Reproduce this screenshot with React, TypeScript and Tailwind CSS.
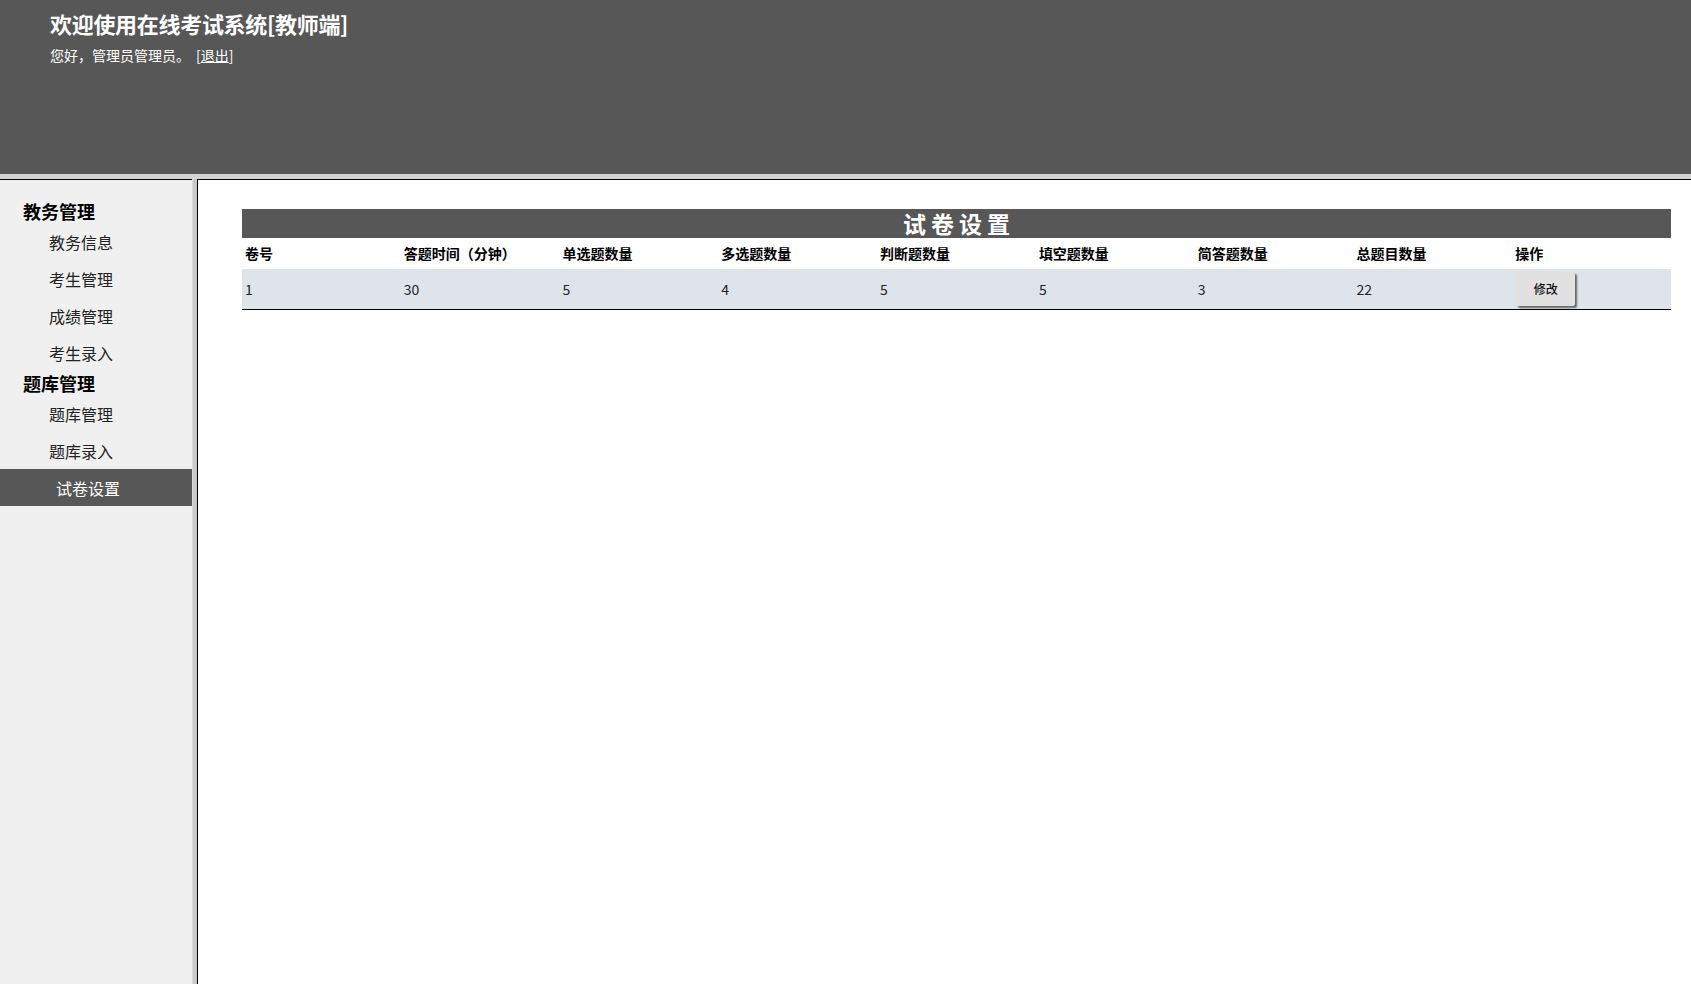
import React from 'react';

const menu = [
  { title: '教务管理', items: ['教务信息', '考生管理', '成绩管理', '考生录入'] },
  { title: '题库管理', items: ['题库管理', '题库录入', '试卷设置'] },
];

const columns = ['卷号', '答题时间（分钟）', '单选题数量', '多选题数量', '判断题数量', '填空题数量', '简答题数量', '总题目数量', '操作'];
const row = ['1', '30', '5', '4', '5', '5', '3', '22'];

const App = () => {
  const active = '试卷设置';

  return (
    <div className="h-[984px] w-full flex flex-col overflow-hidden bg-white font-['Noto_Sans_CJK_SC','Microsoft_YaHei',sans-serif]">
      {/* Top frame */}
      <header className="h-[174px] shrink-0 bg-[#575757] pl-[50px] pt-[8px] text-white">
        <h1 className="text-[22px] leading-[30px] font-bold tracking-[-0.3px]">欢迎使用在线考试系统[教师端]</h1>
        <p className="mt-[7px] text-[14px] leading-[20px]">
          您好，管理员管理员。<span className="ml-[6px]">[<a href="#" className="underline">退出</a>]</span>
        </p>
      </header>
      <div className="h-[5px] shrink-0 bg-[#d4d4d4]" />

      <div className="flex flex-1 min-h-0">
        {/* Left frame */}
        <aside className="w-[192px] shrink-0 bg-[#f0f0f0] border-t border-black pt-[19px]">
          {menu.map((group) => (
            <div key={group.title}>
              <div className="h-[24px] pl-[23px] flex items-center text-[18px] font-bold text-black">{group.title}</div>
              {group.items.map((item) =>
                item === active ? (
                  <div key={item} className="h-[37px] pl-[56px] flex items-center bg-[#575757] text-white text-[16px]">
                    {item}
                  </div>
                ) : (
                  <div key={item} className="h-[37px] pl-[49px] flex items-center text-[#222] text-[16px]">
                    {item}
                  </div>
                )
              )}
            </div>
          ))}
        </aside>
        <div className="w-[5px] shrink-0 bg-[#c8c8c8] border-l border-[#dcdcdc]" />

        {/* Main frame */}
        <main className="flex-1 border-t border-l border-black pt-[29px] pl-[44px] pr-[20px]">
          <div className="h-[29px] bg-[#575757] flex items-center justify-center">
            <span className="text-white text-[23px] font-bold tracking-[5px] pl-[5px] leading-none">试卷设置</span>
          </div>
          <div className="grid grid-cols-9 h-[31px] items-center text-[14px] font-bold text-black">
            {columns.map((c) => (
              <div key={c} className="pl-[3px]">{c}</div>
            ))}
          </div>
          <div className="grid grid-cols-9 h-[41px] items-center bg-[#dfe3ea] border-b border-black text-[14px] text-[#222]">
            {row.map((v, i) => (
              <div key={i} className="pl-[3px]">{v}</div>
            ))}
            <div className="pl-[4px]">
              <button className="w-[59px] h-[34px] bg-[#e1e1e1] rounded-[2px] text-[12px] font-medium text-[#111] shadow-[2px_2px_2px_rgba(0,0,0,0.55)]">
                修改
              </button>
            </div>
          </div>
        </main>
      </div>
    </div>
  );
};

export default App;
